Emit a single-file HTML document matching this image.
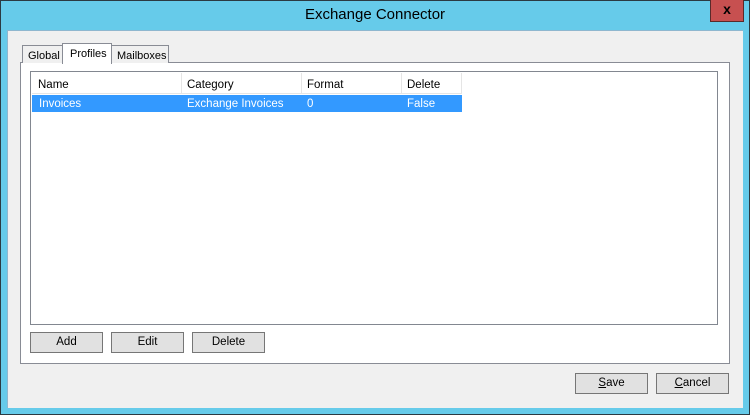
<!DOCTYPE html><html><head><style>
*{margin:0;padding:0;box-sizing:border-box}
body{width:750px;height:415px;background:#66cbea;position:relative;overflow:hidden;font-family:"Liberation Sans",sans-serif;font-size:11.5px;color:#000}
.a{position:absolute}
.btn{position:absolute;background:#e1e1e1;border:1px solid #767676;text-align:center;line-height:19px;font-size:11.5px}
.tab{font-size:11px}
</style></head><body>
<div class="a" style="left:0;top:0;width:750px;height:415px;border:1px solid #2b3a42"></div>
<div class="a" style="left:0;top:6px;width:750px;text-align:center;font-size:15px;color:#000">Exchange Connector</div>
<div class="a" style="left:710px;top:0;width:34px;height:22px;background:#c75050;border:1px solid #5a2a2a;border-top:none;text-align:center;font-weight:bold;font-size:14px;line-height:19px">x</div>
<div class="a" style="left:7px;top:30px;width:736px;height:378px;background:#f0f0f0;border:1px solid #8fb7cf;border-bottom:none;border-right:none"></div>
<div class="a" style="left:20px;top:62px;width:710px;height:302px;background:#fff;border:1px solid #898c95"></div>
<div class="a tab" style="left:22px;top:45px;width:41px;height:18px;background:#f0f0f0;border:1px solid #898c95;border-bottom:none;padding:4px 0 0 5px">Global</div>
<div class="a tab" style="left:111px;top:45px;width:58px;height:18px;background:#f0f0f0;border:1px solid #898c95;border-bottom:none;padding:4px 0 0 5px">Mailboxes</div>
<div class="a tab" style="left:62px;top:43px;width:50px;height:21px;background:#fff;border:1px solid #898c95;border-bottom:none;padding:4px 0 0 7px">Profiles</div>
<div class="a" style="left:30px;top:71px;width:688px;height:254px;background:#fff;border:1px solid #828790"></div>
<div class="a" style="left:32px;top:73px;width:430px;height:21px;background:#fff;border-bottom:1px solid #e5e5e5"></div>
<div class="a" style="left:181px;top:73px;width:1px;height:21px;background:#e5e5e5"></div>
<div class="a" style="left:301px;top:73px;width:1px;height:21px;background:#e5e5e5"></div>
<div class="a" style="left:401px;top:73px;width:1px;height:21px;background:#e5e5e5"></div>
<div class="a" style="left:461px;top:73px;width:1px;height:21px;background:#e5e5e5"></div>
<div class="a" style="left:38px;top:79px">Name</div>
<div class="a" style="left:187px;top:79px">Category</div>
<div class="a" style="left:307px;top:79px">Format</div>
<div class="a" style="left:407px;top:79px">Delete</div>
<div class="a" style="left:32px;top:95px;width:430px;height:17px;background:#3399ff;color:#fff">
<span class="a" style="left:7px;top:3px">Invoices</span><span class="a" style="left:155px;top:3px">Exchange Invoices</span><span class="a" style="left:275px;top:3px">0</span><span class="a" style="left:375px;top:3px">False</span></div>
<div class="btn" style="left:30px;top:332px;width:73px;height:21px">Add</div>
<div class="btn" style="left:111px;top:332px;width:73px;height:21px">Edit</div>
<div class="btn" style="left:192px;top:332px;width:73px;height:21px">Delete</div>
<div class="btn" style="left:575px;top:373px;width:73px;height:21px"><u>S</u>ave</div>
<div class="btn" style="left:656px;top:373px;width:73px;height:21px"><u>C</u>ancel</div>
</body></html>
